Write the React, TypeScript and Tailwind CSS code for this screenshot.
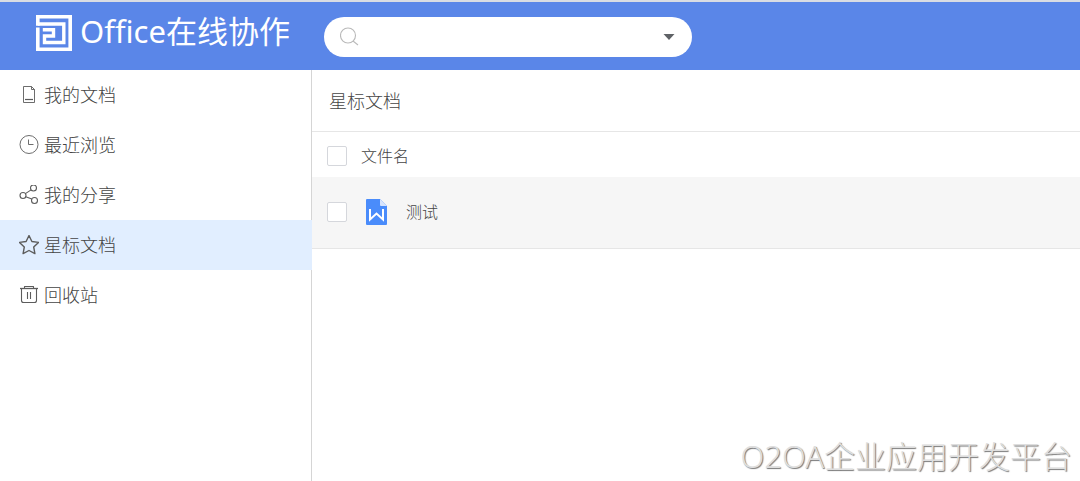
import { ReactNode } from 'react'

type NavItem = {
  label: string
  icon: ReactNode
  active?: boolean
}

// 线条图标的公共外壳
const LineIcon = ({ children }: { children: ReactNode }) => (
  <svg
    className="size-5 shrink-0"
    viewBox="0 0 20 20"
    fill="none"
    stroke="#5c5c5c"
    strokeWidth="1.1"
    strokeLinejoin="round"
    aria-hidden="true"
  >
    {children}
  </svg>
)

const navItems: NavItem[] = [
  {
    label: '我的文档',
    icon: (
      <LineIcon>
        <path d="M4.5 1.5h8l3 3v13h-11z" strokeWidth="0.9" />
        <path d="M12.5 1.5v3h3" strokeWidth="0.9" />
        <path d="M6 14.5h8" strokeWidth="1.2" />
      </LineIcon>
    ),
  },
  {
    label: '最近浏览',
    icon: (
      <LineIcon>
        <circle cx="10" cy="9.5" r="9" strokeWidth="0.9" />
        <path d="M9.5 4.5v5h5" strokeWidth="0.9" />
      </LineIcon>
    ),
  },
  {
    label: '我的分享',
    icon: (
      <LineIcon>
        <circle cx="4" cy="10.5" r="3" />
        <circle cx="14.5" cy="3" r="3" />
        <circle cx="15.5" cy="15.5" r="3" />
        <path d="M6.4 8.6l5.7-3.7M6.8 11.8l6 2.3" />
      </LineIcon>
    ),
  },
  {
    label: '星标文档',
    active: true,
    icon: (
      <LineIcon>
        <path
          d="M10 .5l2.9 6 6.6.9-4.8 4.6 1.2 6.6-5.9-3.1-5.9 3.1 1.2-6.6L.5 7.4l6.6-.9z"
          strokeWidth="1.4"
        />
      </LineIcon>
    ),
  },
  {
    label: '回收站',
    icon: (
      <LineIcon>
        <path d="M1 3.5h18" strokeWidth="1.3" />
        <path d="M5.5 3.5v-2h9v2M2.5 3.5v12q0 2 2 2h11q2 0 2-2v-12" />
        <path d="M8.5 7v7M11.5 7v7" />
      </LineIcon>
    ),
  },
]

const Logo = () => (
  <svg className="size-9" viewBox="0 0 36 36" fill="none" stroke="#fff" aria-hidden="true">
    <path d="M1.8 12.5v21.7h32.4V1.8H1.8v9" strokeWidth="3.6" />
    <path d="M1.8 9h26v18.500H8.500v-6.500h9v-6.200H6.800" strokeWidth="3.4" />
  </svg>
)

const WordFileIcon = () => (
  <svg className="h-7 w-6" viewBox="0 0 24 28" aria-hidden="true">
    <path d="M2 1h13l7 7v18a1 1 0 0 1-1 1H2a1 1 0 0 1-1-1V2a1 1 0 0 1 1-1z" fill="#4a8cfb" />
    <path d="M15 1l7 7h-6a1 1 0 0 1-1-1z" fill="#d6e4fd" />
    <path d="M5 11v10.5l6.500-6 6.500 6V11" fill="none" stroke="#fff" strokeWidth="2" />
  </svg>
)

const Checkbox = ({ label }: { label: string }) => (
  <input
    type="checkbox"
    aria-label={label}
    className="block size-5 appearance-none rounded-xs border border-[#d5d7dc] bg-white checked:bg-[#5a86e8]"
  />
)

const Header = () => (
  <header className="flex h-[70px] items-start border-t-2 border-[#d9dce3] bg-[#5a86e8]">
    <div className="flex w-[324px] shrink-0 items-center gap-2 pt-2 pl-9 text-white">
      <Logo />
      <span className="pb-1 text-[31px] leading-[42px] font-normal whitespace-nowrap">Office在线协作</span>
    </div>
    <form className="mt-[15px] flex h-10 w-[368px] items-center rounded-full bg-white px-4">
      <svg
        className="size-5 shrink-0"
        viewBox="0 0 20 20"
        fill="none"
        stroke="#b9b9b9"
        strokeWidth="1.1"
        aria-hidden="true"
      >
        <circle cx="8" cy="8.5" r="7.5" />
        <path d="M13 14l5 4" />
      </svg>
      <input type="text" aria-label="搜索" className="min-w-0 flex-1 px-2 text-base outline-none" />
      <button type="button" aria-label="展开筛选">
        <svg className="h-2 w-3.5" viewBox="0 0 14 8" fill="#5f6266" aria-hidden="true">
          <path d="M1.5 1h11L7 7z" />
        </svg>
      </button>
    </form>
  </header>
)

const Sidebar = () => (
  <nav className="w-[312px] shrink-0 border-r border-[#d5d5d5]">
    <ul>
      {navItems.map(({ label, icon, active }) => (
        <li key={label}>
          <a
            href="#"
            aria-current={active ? 'page' : undefined}
            className={`-mr-px flex h-[50px] items-center gap-[5px] pl-[19px] text-lg ${active ? 'bg-[#e1eeff]' : ''}`}
          >
            {icon}
            {label}
          </a>
        </li>
      ))}
    </ul>
  </nav>
)

const FileList = () => (
  <main className="min-w-0 flex-1">
    <h1 className="flex h-[62px] items-center border-b border-[#e6e6e6] pl-[17px] text-lg">星标文档</h1>
    <table className="w-full text-left text-base">
      <thead>
        <tr className="h-[45px]">
          <th className="w-[49px] pt-0.5 pl-[15px] font-light">
            <Checkbox label="全选" />
          </th>
          <th className="pt-0.5 font-light">文件名</th>
        </tr>
      </thead>
      <tbody>
        <tr className="h-[71px] border-b border-[#e6e6e6] bg-[#f6f6f6]">
          <td className="pl-[15px]">
            <Checkbox label="选择 测试" />
          </td>
          <td>
            <div className="flex items-center gap-[17px] pl-1">
              <WordFileIcon />
              <span>测试</span>
            </div>
          </td>
        </tr>
      </tbody>
    </table>
  </main>
)

export default function App() {
  return (
    <div className="relative flex min-h-screen flex-col bg-white font-['Noto_Sans','Noto_Sans_CJK_SC',sans-serif] font-light text-[#444]">
      <Header />
      <div className="flex flex-1">
        <Sidebar />
        <FileList />
      </div>
      {/* 右下角水印 */}
      <p className="pointer-events-none absolute right-2 bottom-0.5 text-[31px] leading-[46px] text-[#dedede] [text-shadow:1px_1px_1px_#777]">
        O2OA企业应用开发平台
      </p>
    </div>
  )
}
